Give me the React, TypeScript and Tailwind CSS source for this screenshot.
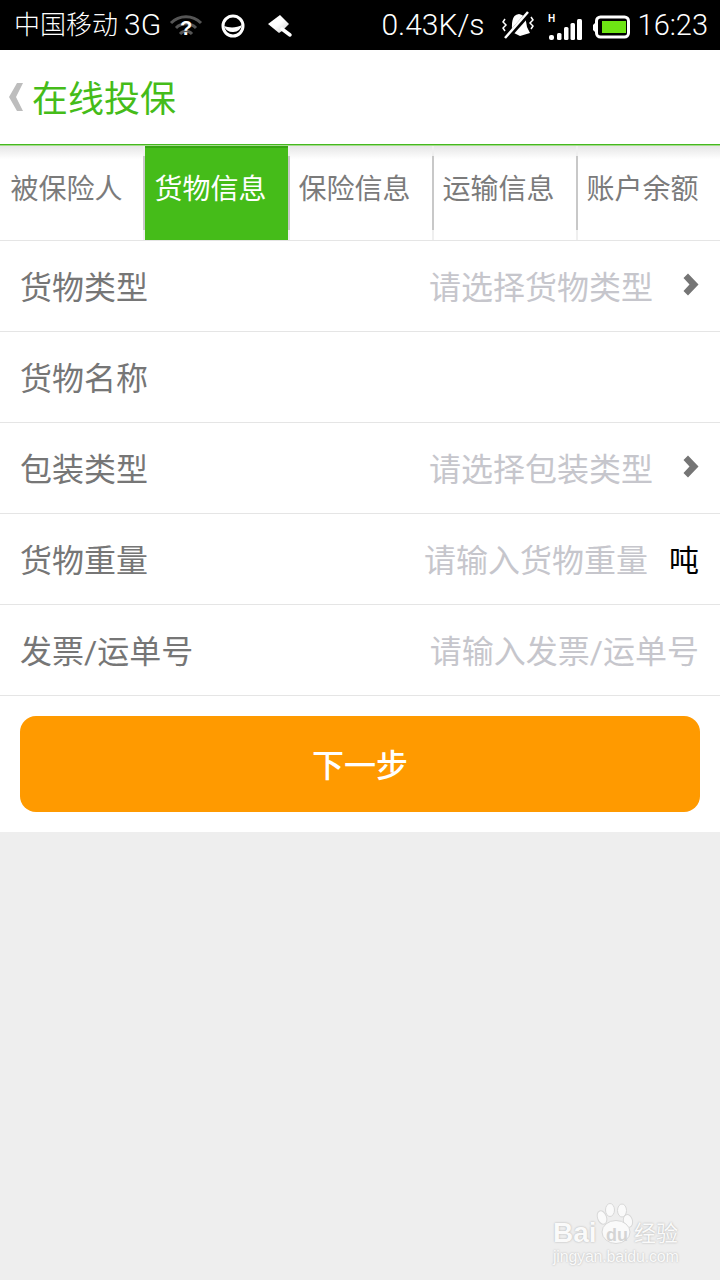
const CJK = "font-['Roboto','Noto_Sans_CJK_SC',sans-serif]";
const LAT = "font-['Roboto','Noto_Sans_CJK_SC',sans-serif] font-light";

function Wifi() {
  return (
    <svg width="34" height="26" viewBox="0 0 34 26" className="ml-[8px] mt-[1px]">
      <path d="M2 10 A21 21 0 0 1 32 10" fill="none" stroke="#555" strokeWidth="3" />
      <path d="M7 15 A14 14 0 0 1 27 15" fill="none" stroke="#555" strokeWidth="3" />
      <path d="M11 21 A8 8 0 0 1 23 21" fill="none" stroke="#555" strokeWidth="3" />
      <text x="17" y="22" textAnchor="middle" fontSize="20" fontWeight="700" fill="#fff" fontFamily="Liberation Sans">?</text>
    </svg>
  );
}

function Sync() {
  return (
    <svg width="24" height="24" viewBox="0 0 24 24" className="ml-[18px] mt-[2px]">
      <circle cx="12" cy="12" r="10" fill="none" stroke="#fff" strokeWidth="3" />
      <path d="M3 12 C8 14 16 14 21 11 A9.5 9.5 0 0 1 3 12 Z" fill="#fff" />
    </svg>
  );
}

function Brush() {
  return (
    <svg width="26" height="24" viewBox="0 0 26 24" className="ml-[22px] mt-[2px]">
      <defs>
        <linearGradient id="brushFill" x1="0" y1="0" x2="1" y2="1">
          <stop offset="0.5" stopColor="#fff" />
          <stop offset="1" stopColor="#c8c8c8" />
        </linearGradient>
      </defs>
      <path d="M1 10 L13 1 L22 10 L15 17 L12 19 Z" fill="url(#brushFill)" />
      <path d="M15 15 L23 21" stroke="#fff" strokeWidth="3.5" strokeLinecap="round" />
    </svg>
  );
}

function MutedBell() {
  return (
    <svg width="32" height="30" viewBox="0 0 32 30">
      <path d="M10 22 C10 14 9 5 17 4 C24 5 24 12 25 17 L28 23 L18 26 Z" fill="#fff" />
      <path d="M4 29 L27 3" stroke="#000" strokeWidth="5" />
      <path d="M3 28 L26 2" stroke="#fff" strokeWidth="2.5" />
      <path d="M3 9 L1 12 L4 15 L1 18 L3 21" fill="none" stroke="#fff" strokeWidth="1.5" />
      <path d="M29 7 L31 10 L28 13 L31 16 L29 19" fill="none" stroke="#fff" strokeWidth="1.5" />
    </svg>
  );
}

function Signal() {
  return (
    <svg width="35" height="28" viewBox="0 0 35 28" className="mt-[3px]">
      <text x="0" y="9" fontSize="10" fontWeight="700" fill="#fff" fontFamily="Liberation Sans">H</text>
      <rect x="1" y="22" width="5" height="5" rx="2" fill="#fff" />
      <rect x="9" y="20" width="4.5" height="7" rx="1.5" fill="#fff" />
      <rect x="16" y="14" width="4.5" height="13" rx="1.5" fill="#fff" />
      <rect x="22.5" y="10" width="4.5" height="17" rx="1.5" fill="#fff" />
      <rect x="29" y="6" width="5" height="21" rx="1.5" fill="#fff" />
    </svg>
  );
}

function Battery() {
  return (
    <svg width="37" height="24" viewBox="0 0 37 24" className="mt-[3px]">
      <path d="M3 7 L0 10 V15 L3 18 Z" fill="#fff" />
      <rect x="3.5" y="2" width="32" height="20" rx="4" fill="none" stroke="#fff" strokeWidth="3" />
      <rect x="9" y="6" width="24" height="12" fill="#6ee514" />
    </svg>
  );
}

function StatusBar() {
  return (
    <div className="flex h-[50px] items-center justify-between bg-black pl-[14px] pr-[12px] text-white">
      <div className="flex items-center">
        <span className={`text-[26px] leading-none ${LAT}`}>中国移动</span>
        <span className={`ml-[6px] text-[30px] leading-none ${LAT}`}>3G</span>
        <Wifi />
        <Sync />
        <Brush />
      </div>
      <div className="flex items-center">
        <span className={`text-[30px] leading-none ${LAT}`}>0.43K/s</span>
        <span className="ml-[17px] flex"><MutedBell /></span>
        <span className="ml-[14px] flex"><Signal /></span>
        <span className="ml-[10px] flex"><Battery /></span>
        <span className={`ml-[8px] text-[29px] leading-none ${LAT}`}>16:23</span>
      </div>
    </div>
  );
}

function Header() {
  return (
    <>
      <div className="flex h-[95px] items-center border-b border-[#45b81f] bg-white pl-[8px]">
        <svg width="16" height="30" viewBox="0 0 16 30">
          <path d="M9 1 H15 L8 15 L15 29 H9 L1 15 Z" fill="#bdbdbd" />
        </svg>
        <span className={`ml-[8px] pt-[6px] text-[36px] leading-none text-[#45bc19] ${CJK}`}>在线投保</span>
      </div>
      <div className="h-[1px] bg-[#a4dc8c]" />
    </>
  );
}

const tabs = ["被保险人", "货物信息", "保险信息", "运输信息", "账户余额"];

function Tabs() {
  return (
    <div className="flex h-[95px] border-b border-[#e5e5e5] bg-gradient-to-b from-[#e6e6e6] via-white via-[14%] to-white">
      {tabs.map((t, i) => (
        <div key={t} className="relative flex w-[144px] items-center justify-center pr-[11px]">
          {i === 1 ? (
            <div className="absolute left-[1px] top-0 h-[94px] w-[143px] border-t-2 border-[#37a512] bg-[#45bc19]" />
          ) : null}
          {i > 0 ? (
            <div className={`absolute top-0 h-[94px] w-[2px] bg-[#efefef] ${i === 1 ? "left-[-1px]" : "left-0"}`}>
              <div className="mt-[10px] h-[74px] bg-[#c8c8c8]" />
            </div>
          ) : null}
          <span className={`relative pb-[6px] text-[28px] leading-none ${i === 1 ? "text-white" : "text-[#7b7b7b]"} ${CJK}`}>{t}</span>
        </div>
      ))}
    </div>
  );
}

function Chevron() {
  return (
    <svg width="16" height="23" viewBox="0 0 16 23" className="mb-[4px] ml-[30px]">
      <path d="M0.5 5 L5 0.5 L15.5 11.5 L5 22.5 L0.5 18 L6.5 11.5 Z" fill="#757575" />
    </svg>
  );
}

function Row({ label, children }: { label: string; children?: React.ReactNode }) {
  return (
    <div className={`flex h-[91px] items-center justify-between border-b border-[#e5e5e5] pl-[20px] pr-[21px] ${CJK}`}>
      <span className="pt-[4px] text-[32px] leading-none text-[#767676]">{label}</span>
      <div className="flex items-center">{children}</div>
    </div>
  );
}

const ph = "pt-[4px] text-[32px] leading-none text-[#c6c6cc]";

function Form() {
  return (
    <div className="bg-white">
      <Row label="货物类型">
        <span className={ph}>请选择货物类型</span>
        <Chevron />
      </Row>
      <Row label="货物名称" />
      <Row label="包装类型">
        <span className={ph}>请选择包装类型</span>
        <Chevron />
      </Row>
      <Row label="货物重量">
        <span className={ph}>请输入货物重量</span>
        <span className="ml-[21px] pt-[4px] text-[30px] leading-none text-black">吨</span>
      </Row>
      <Row label="发票/运单号">
        <span className={ph}>请输入发票/运单号</span>
      </Row>
      <div className="px-[20px] py-[20px]">
        <div className="flex h-[96px] items-center justify-center rounded-[16px] bg-[#ff9a00]">
          <span className={`pt-[3px] text-[32px] font-medium leading-none text-white ${CJK}`}>下一步</span>
        </div>
      </div>
    </div>
  );
}

function Watermark() {
  return (
    <div className="absolute left-[552px] top-[1202px] h-[64px] w-[130px]">
      <svg width="40" height="44" viewBox="0 0 40 44" className="absolute left-[44px] top-0">
        <g fill="#fafafa" stroke="#d8d8d8" strokeWidth="1">
          <ellipse cx="6" cy="15.5" rx="4.5" ry="7" transform="rotate(-20 6 15.5)" />
          <ellipse cx="14" cy="8" rx="4.5" ry="6.5" />
          <ellipse cx="26" cy="8.5" rx="4.5" ry="6.5" />
          <ellipse cx="32" cy="19" rx="4.5" ry="6.5" transform="rotate(-15 32 19)" />
          <ellipse cx="20" cy="30" rx="14" ry="11.5" />
        </g>
      </svg>
      <span className="absolute left-[1px] top-[17px] font-['Liberation_Sans',sans-serif] text-[28px] font-bold leading-none text-[#fafafa] [text-shadow:0_0_2px_#a8a8a8]">Bai</span>
      <span className="absolute left-[54px] top-[24px] font-['Liberation_Sans',sans-serif] text-[18px] font-bold leading-none text-[#d4d4d4]">du</span>
      <span className={`absolute left-[82px] top-[21px] whitespace-nowrap text-[22px] leading-none text-[#fafafa] [text-shadow:0_0_2px_#a8a8a8] ${CJK}`}>经验</span>
      <span className="absolute left-[1px] top-[47px] whitespace-nowrap font-['Liberation_Sans',sans-serif] text-[16px] leading-none tracking-[-0.2px] text-[#fafafa] [text-shadow:0_0_2px_#b0b0b0]">jingyan.baidu.com</span>
    </div>
  );
}

export default function App() {
  return (
    <div className="relative h-[1280px] w-[720px] overflow-hidden bg-[#eeeeee]">
      <StatusBar />
      <Header />
      <Tabs />
      <Form />
      <Watermark />
    </div>
  );
}
